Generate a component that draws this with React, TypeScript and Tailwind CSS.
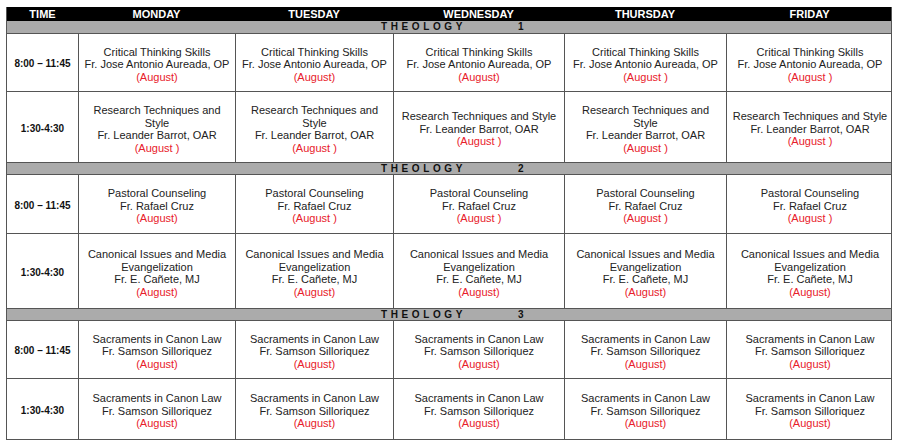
import React from 'react'

type Slot = { title: string[]; teacher: string; month: string }

const days = ['MONDAY', 'TUESDAY', 'WEDNESDAY', 'THURSDAY', 'FRIDAY']
const cols = 'grid grid-cols-[71px_157px_158px_171px_162px_167px]'

// each row: time label, height, and the five day cells
const groups: {
  band: string
  bandH: string
  rows: { time: string; h: string; cells: Slot[] }[]
}[] = [
  {
    band: '1',
    bandH: 'h-[13px]',
    rows: [
      {
        time: '8:00 – 11:45',
        h: 'h-[58px]',
        cells: [
          { title: ['Critical Thinking Skills'], teacher: 'Fr. Jose Antonio Aureada, OP', month: '(August)' },
          { title: ['Critical Thinking Skills'], teacher: 'Fr. Jose Antonio Aureada, OP', month: '(August)' },
          { title: ['Critical Thinking Skills'], teacher: 'Fr. Jose Antonio Aureada, OP', month: '(August)' },
          { title: ['Critical Thinking Skills'], teacher: 'Fr. Jose Antonio Aureada, OP', month: '(August )' },
          { title: ['Critical Thinking Skills'], teacher: 'Fr. Jose Antonio Aureada, OP', month: '(August )' },
        ],
      },
      {
        time: '1:30-4:30',
        h: 'h-[70px]',
        cells: [
          { title: ['Research Techniques and', 'Style'], teacher: 'Fr. Leander Barrot, OAR', month: '(August )' },
          { title: ['Research Techniques and', 'Style'], teacher: 'Fr. Leander Barrot, OAR', month: '(August )' },
          { title: ['Research Techniques and Style'], teacher: 'Fr. Leander Barrot, OAR', month: '(August )' },
          { title: ['Research Techniques and', 'Style'], teacher: 'Fr. Leander Barrot, OAR', month: '(August )' },
          { title: ['Research Techniques and Style'], teacher: 'Fr. Leander Barrot, OAR', month: '(August )' },
        ],
      },
    ],
  },
  {
    band: '2',
    bandH: 'h-[12px]',
    rows: [
      {
        time: '8:00 – 11:45',
        h: 'h-[59px]',
        cells: [
          { title: ['Pastoral Counseling'], teacher: 'Fr. Rafael Cruz', month: '(August)' },
          { title: ['Pastoral Counseling'], teacher: 'Fr. Rafael Cruz', month: '(August )' },
          { title: ['Pastoral Counseling'], teacher: 'Fr. Rafael Cruz', month: '(August )' },
          { title: ['Pastoral Counseling'], teacher: 'Fr. Rafael Cruz', month: '(August )' },
          { title: ['Pastoral Counseling'], teacher: 'Fr. Rafael Cruz', month: '(August )' },
        ],
      },
      {
        time: '1:30-4:30',
        h: 'h-[74px]',
        cells: [
          { title: ['Canonical Issues and Media', 'Evangelization'], teacher: 'Fr. E. Cañete, MJ', month: '(August)' },
          { title: ['Canonical Issues and Media', 'Evangelization'], teacher: 'Fr. E. Cañete, MJ', month: '(August)' },
          { title: ['Canonical Issues and Media', 'Evangelization'], teacher: 'Fr. E. Cañete, MJ', month: '(August)' },
          { title: ['Canonical Issues and Media', 'Evangelization'], teacher: 'Fr. E. Cañete, MJ', month: '(August)' },
          { title: ['Canonical Issues and Media', 'Evangelization'], teacher: 'Fr. E. Cañete, MJ', month: '(August)' },
        ],
      },
    ],
  },
  {
    band: '3',
    bandH: 'h-[12px]',
    rows: [
      {
        time: '8:00 – 11:45',
        h: 'h-[58px]',
        cells: Array(5).fill({ title: ['Sacraments in Canon Law'], teacher: 'Fr. Samson Silloriquez', month: '(August)' }),
      },
      {
        time: '1:30-4:30',
        h: 'h-[60px]',
        cells: Array(5).fill({ title: ['Sacraments in Canon Law'], teacher: 'Fr. Samson Silloriquez', month: '(August)' }),
      },
    ],
  },
]

function Cell({ slot }: { slot: Slot }) {
  return (
    <div className="flex flex-col items-center justify-center border-l border-[#555] pt-[4px] text-center text-[11px] leading-[12.5px] text-[#222]">
      {slot.title.map((t) => (
        <span key={t}>{t}</span>
      ))}
      <span>{slot.teacher}</span>
      <span className="text-[#e8202a]">{slot.month}</span>
    </div>
  )
}

export default function App() {
  return (
    <div className="min-h-[446px] bg-white pl-[6px] pt-[7px]" style={{ fontFamily: '"Liberation Sans", Arial, sans-serif' }}>
      <div className="w-[886px] border-x border-b border-[#555]">
        {/* header */}
        <div className={`${cols} h-[14px] bg-black text-[11px] font-bold leading-[14px] text-white`}>
          <div className="text-center">TIME</div>
          {days.map((d) => (
            <div key={d} className="text-center">
              {d}
            </div>
          ))}
        </div>

        {groups.map((g) => (
          <div key={g.band}>
            {/* theology band */}
            <div className={`${g.bandH} flex items-center border-b border-[#555] bg-[#ababab] text-[10px] font-bold leading-none text-[#111]`}>
              <span className="ml-[374px] w-[132px] tracking-[0.36em]">THEOLOGY</span>
              <span className="ml-[5px]">{g.band}</span>
            </div>
            {g.rows.map((r, i) => (
              <div key={i} className={`${cols} ${r.h} ${i === 0 ? 'border-b border-[#555]' : ''}`}>
                <div className="flex items-center justify-center pt-[2px] text-[10px] font-bold text-[#111]">{r.time}</div>
                {r.cells.map((c, j) => (
                  <Cell key={j} slot={c} />
                ))}
              </div>
            ))}
            {g.band !== '3' && <div className="border-b border-[#555]" />}
          </div>
        ))}
      </div>
    </div>
  )
}
